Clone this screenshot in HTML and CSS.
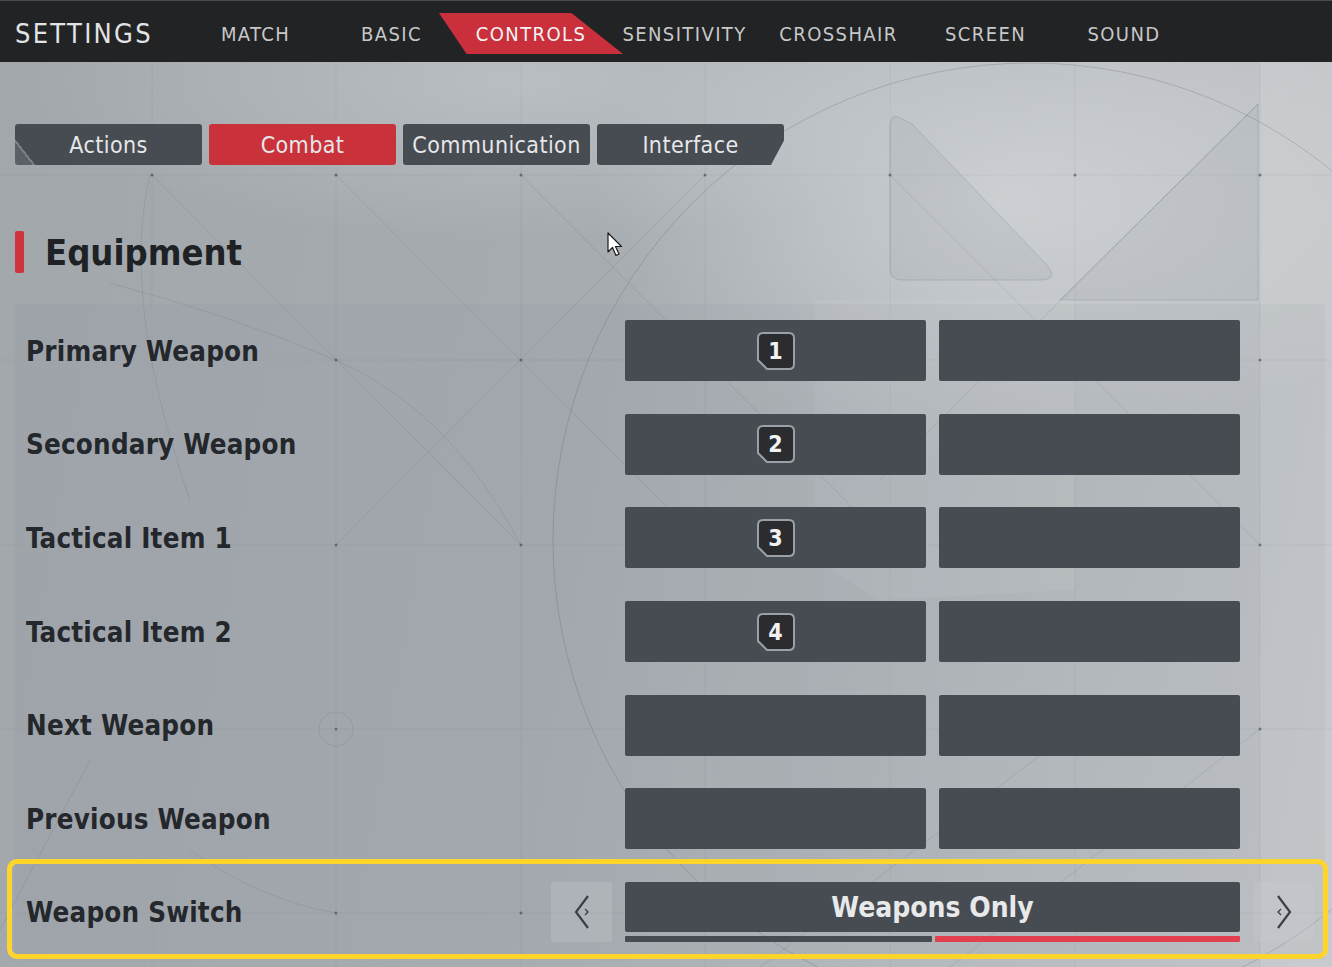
FILE: index.html
```html
<!DOCTYPE html>
<html lang="en">
<head>
    <meta charset="UTF-8">
    <meta name="viewport" content="width=device-width, initial-scale=1.0">
    <title>Settings - Controls</title>
    <link rel="stylesheet" href="styles.css">
</head>
<body>
    <!-- background linework -->
    <svg class="backdrop" width="1332" height="967" viewBox="0 0 1332 967">
        <polygon class="shade" points="1260,62 1332,62 1332,967 1260,967"/>
        <path class="shade soft" d="M900,118 Q890,112 890,128 V268 Q890,280 902,280 H1040 Q1058,280 1048,266 L912,124 Z"/>
        <path class="shade soft" d="M1258,104 L1060,300 L1258,300 Z"/>
        <polygon class="shade dim" points="815,300 1075,300 1075,590 880,600 815,560"/>
        <g class="grid">
            <line x1="152" y1="62" x2="152" y2="967"/>
            <line x1="336" y1="62" x2="336" y2="967"/>
            <line x1="521" y1="62" x2="521" y2="967"/>
            <line x1="705" y1="62" x2="705" y2="967"/>
            <line x1="890" y1="62" x2="890" y2="967"/>
            <line x1="1075" y1="62" x2="1075" y2="967"/>
            <line x1="1260" y1="62" x2="1260" y2="967"/>
            <line x1="0" y1="175" x2="1332" y2="175"/>
            <line x1="0" y1="360" x2="1332" y2="360"/>
            <line x1="0" y1="545" x2="1332" y2="545"/>
            <line x1="0" y1="729" x2="1332" y2="729"/>
            <line x1="0" y1="913" x2="1332" y2="913"/>
        </g>
        <g class="lines">
            <circle class="strong" cx="1030" cy="540" r="477"/>
            <circle cx="336" cy="729" r="17"/>
            <path d="M110,283 Q230,315 336,360 Q450,410 521,545"/>
            <path d="M150,175 Q120,300 190,500"/>
            <path d="M190,850 Q260,900 336,913"/>
            <line x1="152" y1="175" x2="521" y2="545"/>
            <line x1="336" y1="175" x2="705" y2="545"/>
            <line x1="521" y1="175" x2="890" y2="545"/>
            <line x1="705" y1="175" x2="336" y2="545"/>
            <line x1="1258" y1="104" x2="880" y2="480"/>
            <line x1="890" y1="175" x2="1260" y2="545"/>
            <line x1="0" y1="930" x2="90" y2="760"/>
            <line x1="760" y1="967" x2="1075" y2="729"/>
            <line x1="950" y1="967" x2="1260" y2="729"/>
        </g>
        <g class="dots">
            <circle cx="152" cy="175" r="1.5"/><circle cx="336" cy="175" r="1.5"/><circle cx="521" cy="175" r="1.5"/>
            <circle cx="705" cy="175" r="1.5"/><circle cx="890" cy="175" r="1.5"/><circle cx="1075" cy="175" r="1.5"/>
            <circle cx="1260" cy="175" r="1.5"/><circle cx="336" cy="360" r="1.5"/><circle cx="521" cy="360" r="1.5"/>
            <circle cx="1260" cy="360" r="1.5"/><circle cx="336" cy="545" r="1.5"/><circle cx="521" cy="545" r="1.5"/>
            <circle cx="1260" cy="545" r="1.5"/><circle cx="336" cy="729" r="1.5"/><circle cx="1260" cy="729" r="1.5"/>
            <circle cx="336" cy="913" r="1.5"/><circle cx="521" cy="913" r="1.5"/>
        </g>
    </svg>

    <header class="topbar">
        <div class="brand">SETTINGS</div>
        <nav class="mainnav">
            <span class="navitem">MATCH</span>
            <span class="navitem">BASIC</span>
            <span class="navitem active">CONTROLS</span>
            <span class="navitem">SENSITIVITY</span>
            <span class="navitem">CROSSHAIR</span>
            <span class="navitem">SCREEN</span>
            <span class="navitem">SOUND</span>
        </nav>
    </header>

    <main class="content">
        <div class="subtabs">
            <div class="subtab first">Actions</div>
            <div class="subtab active">Combat</div>
            <div class="subtab">Communication</div>
            <div class="subtab last">Interface</div>
        </div>

        <h2 class="section-title"><span class="mark"></span>Equipment</h2>

        <div class="bindings">
            <div class="row">
                <div class="label">Primary Weapon</div>
                <div class="slot">
                    <span class="key">
                        <svg width="38" height="38" viewBox="0 0 38 38"><path d="M6,1 H32 Q37,1 37,6 V32 Q37,37 32,37 H10 L1,28 V6 Q1,1 6,1 Z"/></svg>
                        <b>1</b>
                    </span>
                </div>
                <div class="slot"></div>
            </div>
            <div class="row">
                <div class="label">Secondary Weapon</div>
                <div class="slot">
                    <span class="key">
                        <svg width="38" height="38" viewBox="0 0 38 38"><path d="M6,1 H32 Q37,1 37,6 V32 Q37,37 32,37 H10 L1,28 V6 Q1,1 6,1 Z"/></svg>
                        <b>2</b>
                    </span>
                </div>
                <div class="slot"></div>
            </div>
            <div class="row">
                <div class="label">Tactical Item 1</div>
                <div class="slot">
                    <span class="key">
                        <svg width="38" height="38" viewBox="0 0 38 38"><path d="M6,1 H32 Q37,1 37,6 V32 Q37,37 32,37 H10 L1,28 V6 Q1,1 6,1 Z"/></svg>
                        <b>3</b>
                    </span>
                </div>
                <div class="slot"></div>
            </div>
            <div class="row">
                <div class="label">Tactical Item 2</div>
                <div class="slot">
                    <span class="key">
                        <svg width="38" height="38" viewBox="0 0 38 38"><path d="M6,1 H32 Q37,1 37,6 V32 Q37,37 32,37 H10 L1,28 V6 Q1,1 6,1 Z"/></svg>
                        <b>4</b>
                    </span>
                </div>
                <div class="slot"></div>
            </div>
            <div class="row">
                <div class="label">Next Weapon</div>
                <div class="slot"></div>
                <div class="slot"></div>
            </div>
            <div class="row">
                <div class="label">Previous Weapon</div>
                <div class="slot"></div>
                <div class="slot"></div>
            </div>
            <div class="row switch-row">
                <div class="label">Weapon Switch</div>
                <div class="arrow">
                    <svg width="30" height="40" viewBox="0 0 30 40"><path d="M21,4 L9,20 L21,36"/><path class="notch" d="M18,17 L21,20 L18,23"/></svg>
                </div>
                <div class="selector">
                    <div class="value">Weapons Only</div>
                    <div class="track">
                        <span class="seg"></span>
                        <span class="seg on"></span>
                    </div>
                </div>
                <div class="arrow">
                    <svg width="30" height="40" viewBox="0 0 30 40"><path d="M9,4 L21,20 L9,36"/><path class="notch" d="M12,17 L9,20 L12,23"/></svg>
                </div>
            </div>
        </div>
    </main>

    <!-- mouse pointer -->
    <svg class="pointer" width="18" height="26" viewBox="0 0 18 26">
        <path d="M1,1 L1,20 L5.5,15.5 L9,23.5 L12,22 L8.5,14.5 L14.5,14.5 Z"/>
    </svg>
</body>
</html>
```

FILE: styles.css
```css
body {
    margin: 0;
    width: 1332px;
    height: 967px;
    overflow: hidden;
    position: relative;
    font-family: "DejaVu Sans Condensed", "DejaVu Sans", sans-serif;
    font-stretch: condensed;
    background:
        radial-gradient(ellipse 420px 260px at 1010px 200px, rgba(225, 228, 230, 0.55), rgba(225, 228, 230, 0)),
        radial-gradient(ellipse 500px 160px at 520px 80px, rgba(210, 214, 218, 0.45), rgba(210, 214, 218, 0)),
        linear-gradient(100deg, #a2a7ac 0%, #a7acb1 45%, #b8bcc0 78%, #c2c5c8 100%);
}
.backdrop {
    position: absolute;
    left: 0;
    top: 0;
}
.backdrop .shade {
    fill: rgba(235, 237, 239, 0.16);
}
.backdrop .shade.soft {
    fill: rgba(150, 155, 160, 0.16);
    stroke: rgba(90, 95, 100, 0.2);
}
.backdrop .shade.dim {
    fill: rgba(230, 232, 234, 0.09);
}
.backdrop .grid line {
    stroke: rgba(80, 86, 92, 0.07);
    stroke-width: 1;
}
.backdrop .lines * {
    fill: none;
    stroke: rgba(60, 66, 72, 0.13);
    stroke-width: 1;
}
.backdrop .lines .strong {
    stroke: rgba(60, 66, 72, 0.2);
}
.backdrop .dots circle {
    fill: rgba(40, 44, 48, 0.5);
}

/* top navigation */
.topbar {
    position: relative;
    display: flex;
    align-items: center;
    height: 62px;
    padding-top: 4px;
    box-sizing: border-box;
    background: #222324;
    border-top: 1px solid #4a4b4d;
}
.brand {
    width: 188px;
    padding-left: 15px;
    box-sizing: border-box;
    font-size: 27px;
    letter-spacing: 2.3px;
    color: #e2e3e4;
}
.mainnav {
    display: grid;
    grid-template-columns: 135px 137px 147px 155px 153px 141px 136px;
    align-items: center;
}
.navitem {
    display: flex;
    align-items: center;
    justify-content: center;
    height: 41px;
    font-size: 20px;
    letter-spacing: 1.4px;
    color: #c7c8c9;
}
.navitem.active {
    margin-left: -21px;
    margin-right: -16px;
    background: #c9303b;
    color: #f4f4f4;
    clip-path: polygon(0 0, 72% 0, 100% 100%, 15% 100%);
}

/* page body */
.content {
    position: relative;
    padding-top: 62px;
}
.subtabs {
    display: flex;
    gap: 7px;
    padding-left: 15px;
}
.subtab {
    position: relative;
    width: 187px;
    height: 41px;
    line-height: 43px;
    text-align: center;
    font-size: 23px;
    letter-spacing: 0.4px;
    color: #e6e7e8;
    background: #474c53;
    border-radius: 3px;
}
.subtab.active {
    background: #c9323b;
}
.subtab.first {
    background: linear-gradient(52deg, #5b6067 0, #5b6067 14px, #7b8087 14px, #7b8087 16px, #474c53 16px);
}
.subtab.last {
    clip-path: polygon(0 0, 100% 0, 100% 40%, 93% 100%, 0 100%);
}

.section-title {
    display: flex;
    align-items: center;
    height: 48px;
    margin: 63px 0 28px 15px;
    font-size: 36px;
    font-weight: bold;
    color: #1f2225;
}
.section-title .mark {
    width: 9px;
    height: 42px;
    margin-right: 21px;
    background: #d0333d;
    border-radius: 2px;
}

/* binding list */
.bindings {
    margin: 0 7px 0 15px;
    background: rgba(120, 128, 136, 0.08);
}
.row {
    display: grid;
    grid-template-columns: 1fr 301px 301px;
    column-gap: 13px;
    align-items: center;
    height: 93.6px;
    padding: 0 85px 0 11px;
}
.label {
    font-size: 27.5px;
    font-weight: bold;
    letter-spacing: 0.2px;
    color: #24272b;
}
.slot {
    display: flex;
    align-items: center;
    justify-content: center;
    height: 61px;
    background: #474c53;
    border-radius: 2px;
}
.key {
    display: grid;
    width: 38px;
    height: 38px;
}
.key svg,
.key b {
    grid-area: 1 / 1;
}
.key svg path {
    fill: #2a2c30;
    stroke: #9aa0a6;
    stroke-width: 2;
}
.key b {
    display: flex;
    align-items: center;
    justify-content: center;
    font-size: 23px;
    color: #f2f2f2;
}

.switch-row {
    position: relative;
    display: flex;
    gap: 0;
    padding: 0 11px;
}
.switch-row::after {
    content: "";
    position: absolute;
    top: -7px;
    left: -8px;
    right: -3px;
    bottom: 0;
    border: 5px solid #ffd52b;
    border-radius: 10px;
}
.switch-row .label {
    flex: 1;
}
.arrow {
    display: flex;
    align-items: center;
    justify-content: center;
    width: 61px;
    height: 60px;
    background: rgba(200, 204, 208, 0.28);
    border-radius: 2px;
}
.arrow + .selector {
    margin-left: 13px;
}
.selector + .arrow {
    width: 60px;
    margin-left: 14px;
}
.arrow svg path {
    fill: none;
    stroke: #3b3f44;
    stroke-width: 2.2;
}
.arrow svg .notch {
    stroke-width: 1.3;
}
.selector {
    display: flex;
    flex-direction: column;
    gap: 4px;
    width: 615px;
    height: 60px;
}
.value {
    height: 50px;
    line-height: 52px;
    text-align: center;
    font-size: 28px;
    font-weight: bold;
    color: #e8e9ea;
    background: #474c53;
    border-radius: 2px;
}
.track {
    display: flex;
    gap: 3px;
    height: 6px;
}
.track .seg {
    flex: 307;
    background: #474c53;
    border-radius: 1px;
}
.track .seg.on {
    flex: 305;
    background: #e2404e;
}

.pointer {
    position: absolute;
    left: 607px;
    top: 232px;
}
.pointer path {
    fill: #ffffff;
    stroke: #1a1a1a;
    stroke-width: 1.2;
    stroke-linejoin: round;
}
```
